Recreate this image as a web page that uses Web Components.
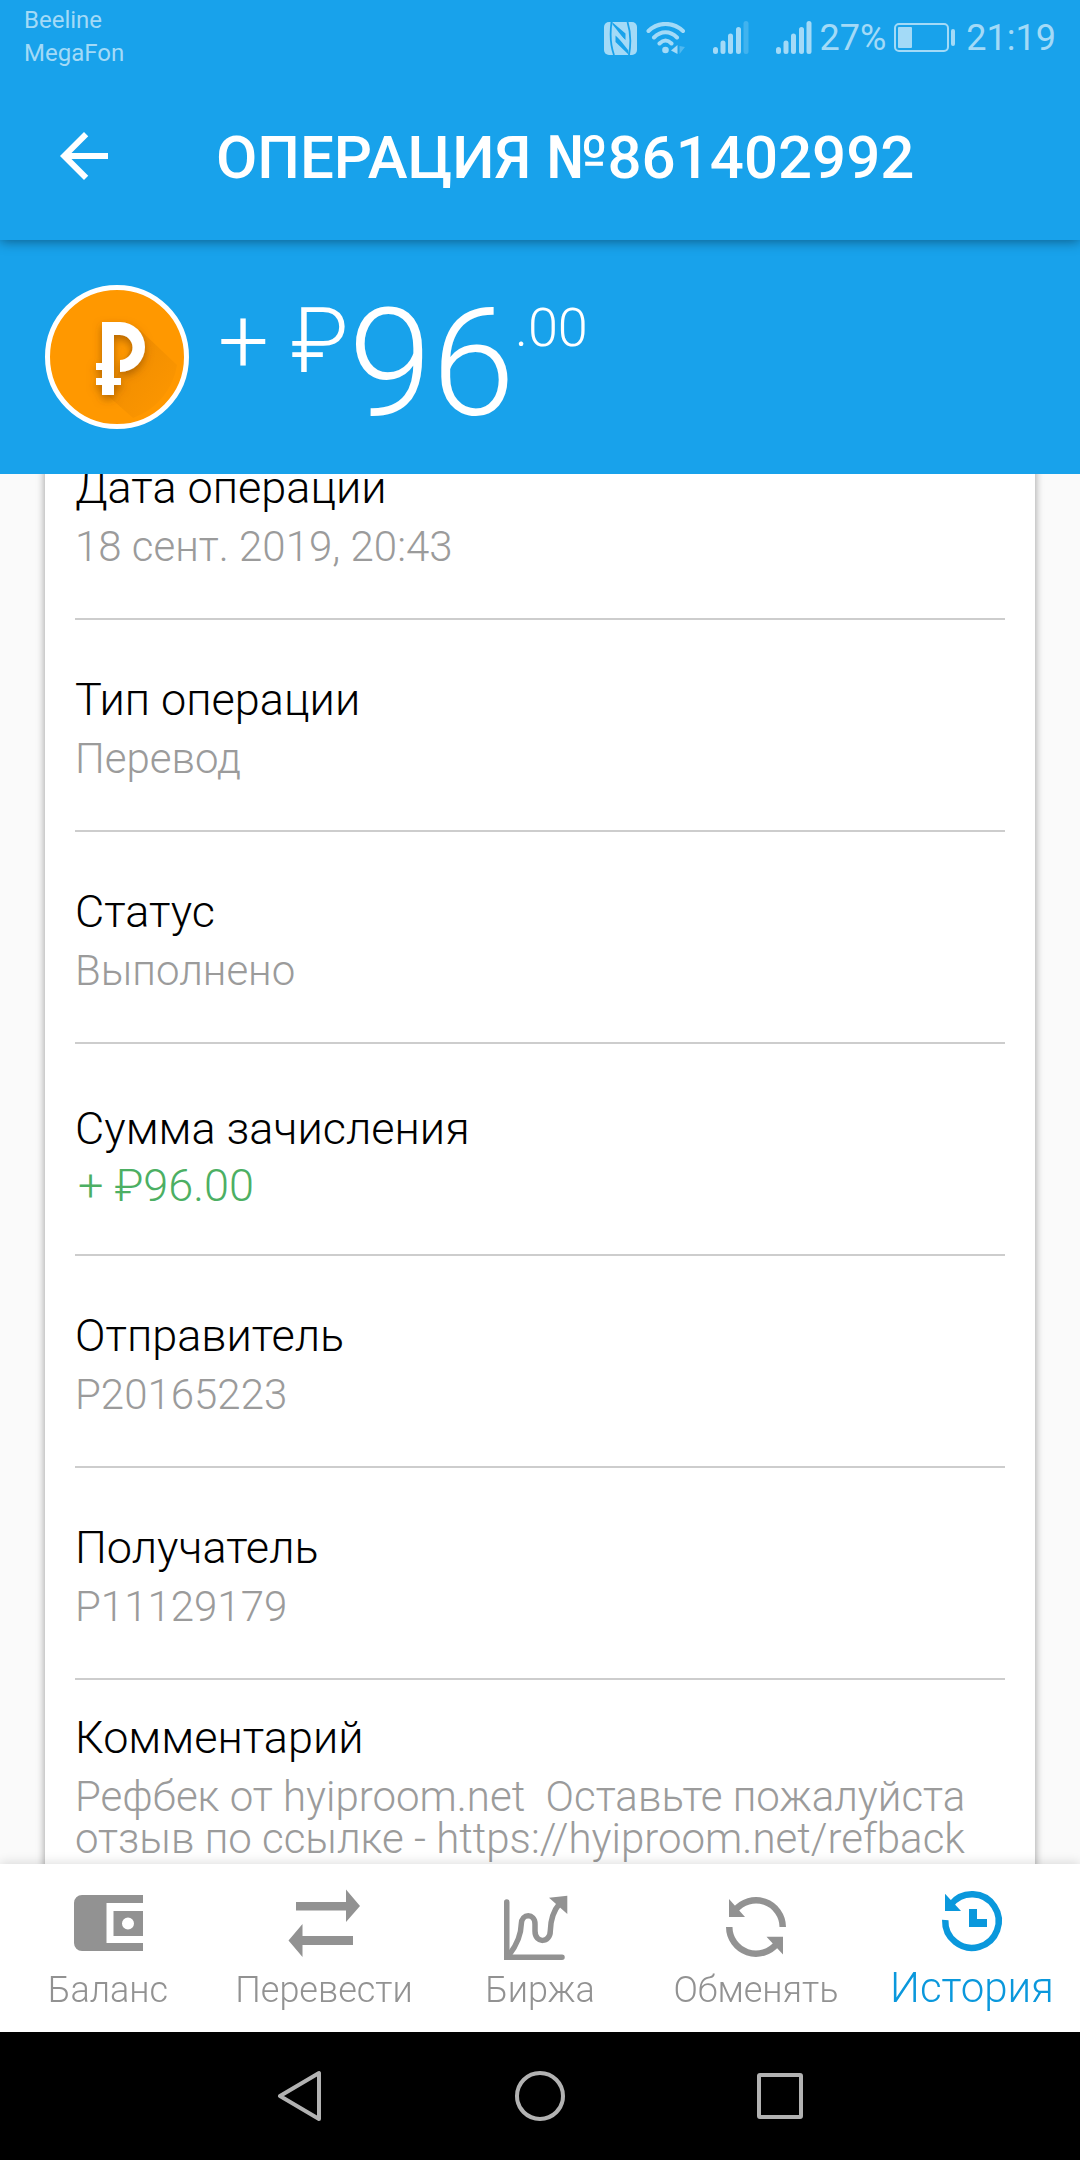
<!DOCTYPE html>
<html lang="ru">
<head>
<meta charset="utf-8">
<meta name="viewport" content="width=device-width, initial-scale=1">
<title>Операция №861402992</title>
<style>
  html, body { margin: 0; height: 100%; }
  body { font-family: Roboto, "Noto Sans", sans-serif; font-weight: 300; background: #fafafa; }
</style>
</head>
<body>
<wallet-app>
  <status-bar slot="top"></status-bar>
  <app-bar slot="top">ОПЕРАЦИЯ №861402992</app-bar>
  <amount-hero slot="top" sign="+" currency="₽" whole="96" cents=".00"></amount-hero>
  <detail-card>
    <detail-row label="Дата операции">18 сент. 2019, 20:43</detail-row>
    <detail-row label="Тип операции">Перевод</detail-row>
    <detail-row label="Статус">Выполнено</detail-row>
    <detail-row label="Сумма зачисления" kind="credit">+ ₽96.00</detail-row>
    <detail-row label="Отправитель">P20165223</detail-row>
    <detail-row label="Получатель">P11129179</detail-row>
    <detail-row label="Комментарий" kind="note">Рефбек от hyiproom.net  Оставьте пожалуйста отзыв по ссылке - https://hyiproom.net/refback</detail-row>
  </detail-card>
  <tab-bar slot="bottom">
    <tab-item href="#balance" icon="wallet">Баланс</tab-item>
    <tab-item href="#transfer" icon="transfer">Перевести</tab-item>
    <tab-item href="#market" icon="chart">Биржа</tab-item>
    <tab-item href="#exchange" icon="exchange">Обменять</tab-item>
    <tab-item href="#history" icon="history" active>История</tab-item>
  </tab-bar>
  <system-nav slot="bottom"></system-nav>
</wallet-app>

<script>
const define = (name, render, after) => customElements.define(name, class extends HTMLElement {
  connectedCallback() {
    if (this.shadowRoot) return;
    this.attachShadow({ mode: 'open' }).innerHTML = render(this);
    if (after) after(this);
  }
});

const bars = last => `<svg width="36" height="34" viewBox="0 0 36 34" fill="none" stroke="#a3daf7" stroke-width="5" stroke-linecap="round" aria-hidden="true">
  <path d="M2.5 28.5v2M10 22v8.500M17.500 15v15.500M25.500 8.500v22"/><path d="M33 2.500v28" stroke-opacity="${last}"/></svg>`;

define('status-bar', () => `
<style>
  :host { display: flex; justify-content: space-between; height: 72px; padding: 0 24px; box-sizing: border-box; background: #18a2eb; color: #a3daf7; font-weight: 400; position: relative; z-index: 2; }
  .ops { padding-top: 4px; font-size: 24px; line-height: 33px; }
  .right { display: flex; align-items: center; padding-top: 4px; font-size: 36px; line-height: 42px; }
  svg { display: block; }
  .wifi { margin-left: 9px; } .sim { margin-left: 27px; } .pct { margin-left: 8px; }
  .bat { margin: 0 10px 0 8px; }
</style>
<div class="ops"><div>Beeline</div><div>MegaFon</div></div>
<div class="right">
  <svg width="33" height="33" viewBox="0 0 33 33" aria-hidden="true"><rect width="33" height="33" rx="5" fill="#a3daf7"/>
    <path fill="none" stroke="#18a2eb" stroke-width="1.800" d="M7.500 0C6 11 6 22 10 33M25 33C27 22 27 11 23.500 0"/>
    <path fill="#18a2eb" d="M8 0L21.500 11.500V18L10 8ZM25 33L11.500 20V13.500L23.500 25Z"/>
    <path fill="#a3daf7" d="M9 3L24 22V28L9 9Z"/></svg>
  <svg class="wifi" width="40" height="33" viewBox="0 0 40 33" fill="none" stroke="#a3daf7" stroke-width="4" stroke-linecap="round" aria-hidden="true">
    <path d="M2.500 9C12-.5 27-.5 37 9M8 15.500c7-7 16-7 23 0M13.500 21.500c4-4 8-4 12 0"/>
    <circle cx="19.500" cy="28" r="3.300" fill="#a3daf7" stroke="none"/><path d="M31.500 23v9l-6.500-3.500z" fill="#a3daf7" stroke="none"/><path d="M33.500 24v8l5.500-7z" fill="#a3daf7" fill-opacity=".4" stroke="none"/></svg>
  <span class="sim">${bars('.3')}</span><span class="sim">${bars('1')}</span>
  <span class="pct">27%</span>
  <svg class="bat" width="62" height="30" viewBox="0 0 62 30" aria-hidden="true"><rect x="1" y="1" width="53" height="27" rx="4" fill="none" stroke="#a3daf7" stroke-width="2"/><rect x="4" y="4" width="14" height="21" rx="1" fill="#a3daf7"/><rect x="57" y="6" width="4" height="17" rx="2" fill="#a3daf7"/></svg>
  <time>21:19</time>
</div>`);

define('app-bar', () => `
<style>
  :host { display: flex; align-items: center; height: 168px; padding: 0 48px; gap: 96px; box-sizing: border-box; background: #18a2eb; color: #fff; position: relative; z-index: 1; box-shadow: 0 1px 12px rgba(0,0,0,.45); }
  button { border: 0; padding: 0; background: none; color: inherit; }
  svg { display: block; }
  h1 { margin: 0; padding-top: 4px; font-size: 60px; line-height: 70px; font-weight: 500; white-space: nowrap; }
</style>
<button type="button" aria-label="Назад"><svg width="72" height="72" viewBox="0 0 24 24"><path fill="currentColor" d="M20 11H7.830l5.590-5.590L12 4l-8 8 8 8 1.410-1.410L7.830 13H20v-2z"/></svg></button>
<h1><slot></slot></h1>`);

define('amount-hero', el => `
<style>
  :host { display: flex; align-items: flex-start; gap: 29px; height: 234px; padding: 45px 45px 0; box-sizing: border-box; background: #18a2eb; color: #fff; }
  .coin { display: block; flex: none; }
  .sum { display: flex; align-items: flex-start; padding-top: 4px; font-weight: 300; white-space: pre; }
  .unit { font-size: 90px; line-height: 106px; }
  .whole { font-size: 150px; line-height: 150px; }
  .cents { font-size: 54px; line-height: 78px; }
</style>
<svg class="coin" width="144" height="144" viewBox="0 0 144 144" aria-hidden="true">
  <defs><linearGradient id="long" x1="0" y1="0" x2="1" y2="1"><stop offset="0" stop-color="#e68600"/><stop offset="1" stop-color="#ff9800"/></linearGradient>
  <filter id="soft" x="-30%" y="-30%" width="160%" height="160%"><feDropShadow dx="0" dy="4" stdDeviation="4" flood-color="#7a3c00" flood-opacity=".55"/></filter></defs>
  <circle cx="72" cy="72" r="69.500" fill="#ff9800" stroke="#fff" stroke-width="5"/>
  <path fill="url(#long)" d="M95 45L132 80A67 67 0 0 1 88 133L62 110Z" opacity=".8"/>
  <path fill="#fff" filter="url(#soft)" d="M57 37H75A25 25 0 0 1 75 87V75A12.500 12.500 0 0 0 75 50H69V93H76V100H69V110H57V100H51V93H57V85H51V78H57Z"/>
</svg>
<div class="sum"><span class="unit">${el.getAttribute('sign')} ${el.getAttribute('currency')}</span><span class="whole">${el.getAttribute('whole')}</span><span class="cents">${el.getAttribute('cents')}</span></div>`);

define('detail-row', el => `
<style>
  :host { display: flex; flex-direction: column; justify-content: center; gap: 9px; min-height: 212px; box-sizing: border-box; border-bottom: 2px solid #cdcdcd; }
  .label { font-size: 45px; line-height: 58px; color: #000; }
  .value { font-size: 42px; line-height: 42px; color: #9b9b9b; white-space: pre-wrap; }
  :host([kind="credit"]) { padding-top: 8px; gap: 7px; }
  :host([kind="credit"]) .value { font-size: 45px; color: #4caf63; padding-left: 3px; }
  :host([kind="note"]) { justify-content: flex-start; padding: 29px 0; border-bottom: 0; }
</style>
<div class="label">${el.getAttribute('label')}</div><div class="value"><slot></slot></div>`);

define('detail-card', () => `
<style>
  :host { display: block; margin: 30px 45px; padding: 0 30px; background: #fff; border-radius: 4px; box-shadow: 0 2px 8px rgba(0,0,0,.4); }
</style><slot></slot>`);

const icons = {
  wallet: '<path fill="currentColor" fill-rule="evenodd" d="M10 7H71V15H34.500V55H71V63H10A8 8 0 0 1 2 55V15A8 8 0 0 1 10 7ZM41.500 23H71V48H41.500ZM56 29.500A6 6 0 1 0 56 41.500 6 6 0 1 0 56 29.500Z"/>',
  transfer: '<path fill="currentColor" d="M8 14H58V1.500L72 18 58 34V22.500H8ZM65 57H14.500V69L.500 52.500 14.500 36V48H65Z"/>',
  chart: '<g fill="none" stroke="currentColor" stroke-width="5.500" stroke-linecap="round"><path d="M2.750 14V69.250H58"/><path stroke-linecap="butt" d="M5 67C12 58 17 49 17.300 36C17.500 25 31 25 31 36V43C31 56 46.300 55 46.300 43C46.500 30 50 22 56 15"/></g><path fill="currentColor" d="M45 9.700L63.300 7.700V26ZM0 66H6V72H0Z"/>',
  exchange: '<g fill="none" stroke="currentColor" stroke-width="6.500"><path d="M62.750 39A26.750 26.750 0 0 0 15 22.500M9.250 39A26.750 26.750 0 0 0 57 55.500"/></g><path fill="currentColor" d="M9 11V29H25ZM46.500 48.700H63V66.500Z"/>',
  history: '<path fill="none" stroke="currentColor" stroke-width="6.500" d="M9.250 32A26.750 26.750 0 1 0 15 16.500"/><path fill="currentColor" d="M9 5.700V23H25ZM33 21H41V31H51V39H33Z"/>'
};

define('tab-item', el => `
<style>
  :host { flex: 1 1 0; min-width: 0; }
  a { display: flex; flex-direction: column; align-items: center; gap: 8px; color: #929292; text-decoration: none; font-size: 36px; line-height: 44px; white-space: nowrap; }
  svg { display: block; overflow: visible; }
  :host([active]) a { color: #0a98dc; font-size: 42px; line-height: 40px; }
</style>
<a href="${el.getAttribute('href')}"${el.hasAttribute('active') ? ' aria-current="page"' : ''}><svg width="72" height="72" viewBox="0 0 72 72" aria-hidden="true">${icons[el.getAttribute('icon')]}</svg><span><slot></slot></span></a>`);

define('tab-bar', () => `
<style>
  :host { display: block; position: relative; background: #fff; box-shadow: 0 -2px 10px rgba(0,0,0,.12); }
  nav { display: flex; height: 168px; padding-top: 24px; box-sizing: border-box; }
</style><nav><slot></slot></nav>`);

define('system-nav', () => `
<style>
  :host { display: flex; height: 128px; padding: 0 16.667%; background: #000; position: relative; }
  button { flex: 1; display: grid; place-items: center; border: 0; padding: 0; background: none; color: #b2b2b2; }
</style>
${[['Назад', '<path d="M8 28L47 5V51Z"/>'], ['Домой', '<circle cx="28" cy="28" r="23"/>'], ['Недавние', '<rect x="7" y="7" width="42" height="42" rx="1"/>']]
  .map(([name, shape]) => `<button type="button" aria-label="${name}"><svg width="56" height="56" viewBox="0 0 56 56" fill="none" stroke="currentColor" stroke-width="4" stroke-linejoin="round">${shape}</svg></button>`).join('')}`);

define('wallet-app', () => `
<style>
  :host { display: flex; flex-direction: column; height: 100vh; overflow: hidden; }
  header, footer { flex: none; }
  main { flex: 1 1 0; min-height: 0; overflow-y: auto; scrollbar-width: none; background: #fafafa; display: flow-root; }
  footer { position: relative; }
</style>
<header><slot name="top"></slot></header>
<main><slot></slot></main>
<footer><slot name="bottom"></slot></footer>`,
  el => { el.shadowRoot.querySelector('main').scrollTop = 96; });
</script>
</body>
</html>
